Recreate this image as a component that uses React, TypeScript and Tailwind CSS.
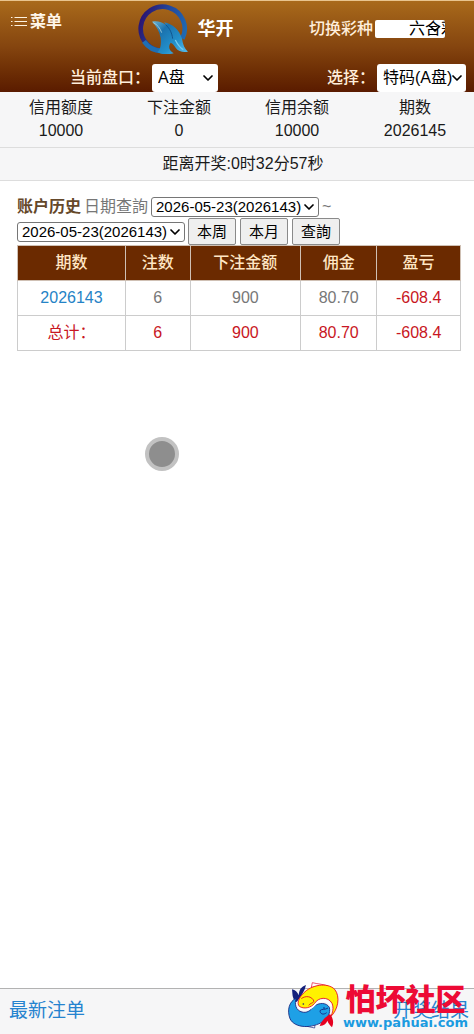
import React from 'react';
import { ChevronDown } from 'lucide-react';

const stats = [
  { label: '信用额度', value: '10000' },
  { label: '下注金额', value: '0' },
  { label: '信用余额', value: '10000' },
  { label: '期数', value: '2026145' },
];

const columns = ['期数', '注数', '下注金额', '佣金', '盈亏'];

const rows = [{ period: '2026143', count: '6', amount: '900', rebate: '80.70', profit: '-608.4' }];

const periods = ['2026-05-23(2026143)'];

interface PickerProps {
  id: string;
  label: string;
  options: string[];
  className: string;
  chevronClass?: string;
  hideLabel?: boolean;
}

const Picker: React.FC<PickerProps> = ({ id, label, options, className, chevronClass = 'right-0.5', hideLabel }) => (
  <div className="flex items-center gap-0.5">
    {!hideLabel && (
      <label htmlFor={id} className="font-medium text-[#ffeedb]">
        {label}
      </label>
    )}
    <div className="relative flex">
      <select id={id} aria-label={label} className={`appearance-none bg-white text-black ${className}`}>
        {options.map((option) => (
          <option key={option}>{option}</option>
        ))}
      </select>
      <ChevronDown className={`pointer-events-none absolute top-1/2 h-4 w-4 -translate-y-1/2 text-black ${chevronClass}`} strokeWidth={2.6} />
    </div>
  </div>
);

const MenuIcon = () => (
  <svg width="16" height="12" viewBox="0 0 16 12" fill="none" stroke="#fff3e0" strokeWidth="1">
    <path d="M3.5 1.5H16M3.5 5.5H16M3.5 9.5H16" />
    <path d="M0 1.5H1.5M0 5.5H1.5M0 9.5H1.5" />
  </svg>
);

const BrandLogo = () => (
  <svg width="50" height="50" viewBox="54 14 150 150" fill="none">
    <defs>
      <linearGradient id="ring" x1="55" y1="70" x2="195" y2="120" gradientUnits="userSpaceOnUse">
        <stop offset="0" stopColor="#2b1270" />
        <stop offset="0.5" stopColor="#23489c" />
        <stop offset="1" stopColor="#1f6cb4" />
      </linearGradient>
      <linearGradient id="wing" x1="100" y1="65" x2="190" y2="160" gradientUnits="userSpaceOnUse">
        <stop offset="0" stopColor="#6bb4d0" />
        <stop offset="0.3" stopColor="#1b72ae" />
        <stop offset="0.7" stopColor="#2390cb" />
        <stop offset="1" stopColor="#4fb5e6" />
      </linearGradient>
    </defs>
    <path d="M187 118A66 66 0 1 0 132 154" stroke="url(#ring)" strokeWidth="14" />
    <path d="M72 126C86 146 108 157 134 154" stroke="#1f6fb4" strokeWidth="14" />
    <path
      fill="url(#wing)"
      d="M96 67C112 64 126 68 137 76C136 73 134 71 132 69C158 73 178 92 186 118C189 136 194 148 204 157C190 160 176 157 168 147C164 140 160 134 152 130C144 140 146 152 161 162C145 166 122 166 112 158C122 150 124 134 122 116C118 96 110 80 96 67Z"
    />
    <path d="M100 70C112 76 120 86 125 100" stroke="#a9d3dd" strokeWidth="2.5" />
    <path d="M137 76C150 88 156 102 158 118" stroke="#125690" strokeWidth="3" />
    <path d="M166 122C172 134 178 144 190 151" stroke="#74cbf0" strokeWidth="4" />
  </svg>
);

const FishLogo = () => (
  <svg width="51" height="48" viewBox="22 20 153 144" fill="none" strokeLinejoin="round">
    <path d="M92 36L95 22C110 26 126 26 142 32Z" fill="#fff" stroke="#e60020" strokeWidth="2" />
    <path d="M66 150L102 158L103 142Z" fill="#fff" stroke="#14207c" strokeWidth="2" />
    <path d="M44 78C34 66 36 58 34 42C44 44 50 50 54 60C56 42 62 34 76 29C72 48 62 62 48 80Z" fill="#14207c" />
    {/* blue fish */}
    <path
      d="M47 68C26 78 18 104 28 130C42 160 96 160 128 138C142 128 150 112 146 96C138 82 116 80 98 94C90 106 78 114 64 110C46 106 40 86 47 68Z"
      fill="#1ea0e6"
      stroke="#14207c"
      strokeWidth="2.5"
    />
    {/* white gap between the two bodies */}
    <path d="M52 96C62 106 88 104 100 90C112 72 142 70 152 92" stroke="#fff" strokeWidth="6" />
    {/* yellow fish */}
    <path
      d="M150 124C172 104 180 64 162 42C140 20 92 28 68 54C54 68 48 84 56 93C70 102 90 98 102 84C112 66 142 62 154 84C160 98 156 112 150 124Z"
      fill="#fff200"
      stroke="#e60020"
      strokeWidth="2.5"
    />
    <path d="M148 116C158 130 160 142 154 156C146 148 142 142 140 136C136 146 130 150 117 152C122 136 134 126 148 116Z" fill="#e60020" />
    <path d="M62 70C74 60 94 62 100 78C96 84 88 84 84 90" stroke="#e60020" strokeWidth="2.5" />
    <path d="M138 112C128 120 118 116 118 106C122 100 134 104 142 98" stroke="#14207c" strokeWidth="2.5" />
    <circle cx="68" cy="86" r="2.5" fill="#14207c" />
    <circle cx="130" cy="98" r="2.5" fill="#14207c" />
  </svg>
);

const Header = () => (
  <header className="border-t border-[#e8c48e] bg-linear-to-b from-[#a96a1b] via-[#85450f] to-[#5a1b00]">
    <div className="flex h-[63px] items-center justify-between pr-[29px] pb-[7px] pl-[11px]">
      <button type="button" className="flex items-center gap-[3px] self-start pt-2.5 leading-[22px] font-bold text-[#fff6ea]">
        <MenuIcon />
        菜单
      </button>
      <h1 className="flex items-center gap-2.5 text-[18px] font-bold text-white">
        <BrandLogo />
        华开
      </h1>
      <Picker id="lottery" label="切换彩种" options={['六合彩']} className="h-[18px] w-[70px] rounded-[2px] pl-[34px] leading-[18px]" chevronClass="right-0.5" />
    </div>
    <div className="flex justify-between pr-2 pl-[70px]">
      <Picker id="pan" label="当前盘口：" options={['A盘']} className="h-7 w-[66px] rounded-[3px] pl-1.5" />
      <Picker id="play" label="选择：" options={['特码(A盘)']} className="h-7 w-[89px] rounded-[3px] pl-1.5" chevronClass="right-px" />
    </div>
  </header>
);

const Footer = () => (
  <footer className="relative mt-auto flex h-[46px] items-center justify-between border-t border-[#b2b2b2] bg-[#f6f6f7] px-[9px] text-[19px] text-[#2583cf]">
    <a href="#latest">最新注单</a>
    <a href="#results" className="-mr-1">开奖结果</a>
    <div className="pointer-events-none absolute right-1.5 bottom-1 flex items-end gap-1">
      <FishLogo />
      <div className="flex flex-col items-center">
        <span className="text-[30px] leading-[30px] font-black text-[#ed0a35]">怕坏社区</span>
        <span className="font-['DejaVu_Sans',sans-serif] text-[13px] leading-[15px] font-bold text-[#1b9be0]">www.pahuai.com</span>
      </div>
    </div>
  </footer>
);

const History = () => (
  <main className="pt-[15px] pr-[13px] pl-[17px] text-[#777]">
    <form className="flex flex-wrap items-center gap-x-[3px] leading-[22px]">
      <h2 className="font-bold text-[#65482a]">账户历史</h2>
      <span>日期查詢</span>
      <Picker id="from" label="开始日期" options={periods} hideLabel className="h-5 w-[168px] rounded-[3px] border border-[#767676] pl-1 text-[15px] leading-[18px]" />
      <span>~</span>
      <Picker id="to" label="结束日期" options={periods} hideLabel className="h-5 w-[168px] rounded-[3px] border border-[#767676] pl-1 text-[15px] leading-[18px]" />
      <div className="flex gap-1">
        {['本周', '本月', '查詢'].map((text) => (
          <button key={text} type="button" className="h-[27px] w-12 rounded-[2px] border border-[#8a8a8a] bg-[#efefef] text-[15px] text-black">
            {text}
          </button>
        ))}
      </div>
    </form>
    <table className="w-full border-collapse text-center">
      <thead>
        <tr className="h-[35px] bg-[#6b2a00] text-[#ffe6c4]">
          {columns.map((column) => (
            <th key={column} className="border border-[#cfc0b4] px-1.5 font-medium">{column}</th>
          ))}
        </tr>
      </thead>
      <tbody>
        {rows.map((row) => (
          <tr key={row.period} className="h-[35px]">
            <td className="border border-[#ccc] px-1.5">
              <a href="#period" className="text-[#2583c6]">{row.period}</a>
            </td>
            <td className="border border-[#ccc] px-1.5">{row.count}</td>
            <td className="border border-[#ccc] px-1.5">{row.amount}</td>
            <td className="border border-[#ccc] px-1.5">{row.rebate}</td>
            <td className="border border-[#ccc] px-1.5 text-[#c81623]">{row.profit}</td>
          </tr>
        ))}
        <tr className="h-[35px] text-[#c81623]">
          {['总计：', '6', '900', '80.70', '-608.4'].map((text) => (
            <td key={text} className="border border-[#ccc] px-1.5">{text}</td>
          ))}
        </tr>
      </tbody>
    </table>
  </main>
);

export default function App() {
  return (
    <div className="relative flex min-h-screen flex-col bg-white font-['Liberation_Sans','Noto_Sans_CJK_SC',sans-serif] text-[16px] text-[#1a1a1a]">
      <Header />
      <dl className="grid grid-cols-4 border-b border-[#ddd] bg-[#f6f6f7] pt-1 pb-[5px] pl-0.5 text-center leading-[23px]">
        {stats.map((stat) => (
          <div key={stat.label}>
            <dt>{stat.label}</dt>
            <dd>{stat.value}</dd>
          </div>
        ))}
      </dl>
      <p className="border-b border-[#ddd] bg-[#f6f6f7] pl-3 text-center leading-8">距离开奖:0时32分57秒</p>
      <History />
      {/* touch pointer */}
      <div className="absolute top-[437px] left-[145px] h-[34px] w-[34px] rounded-full border-4 border-[#c2c2c2] bg-[#8e8e8e]" />
      <Footer />
    </div>
  );
}
